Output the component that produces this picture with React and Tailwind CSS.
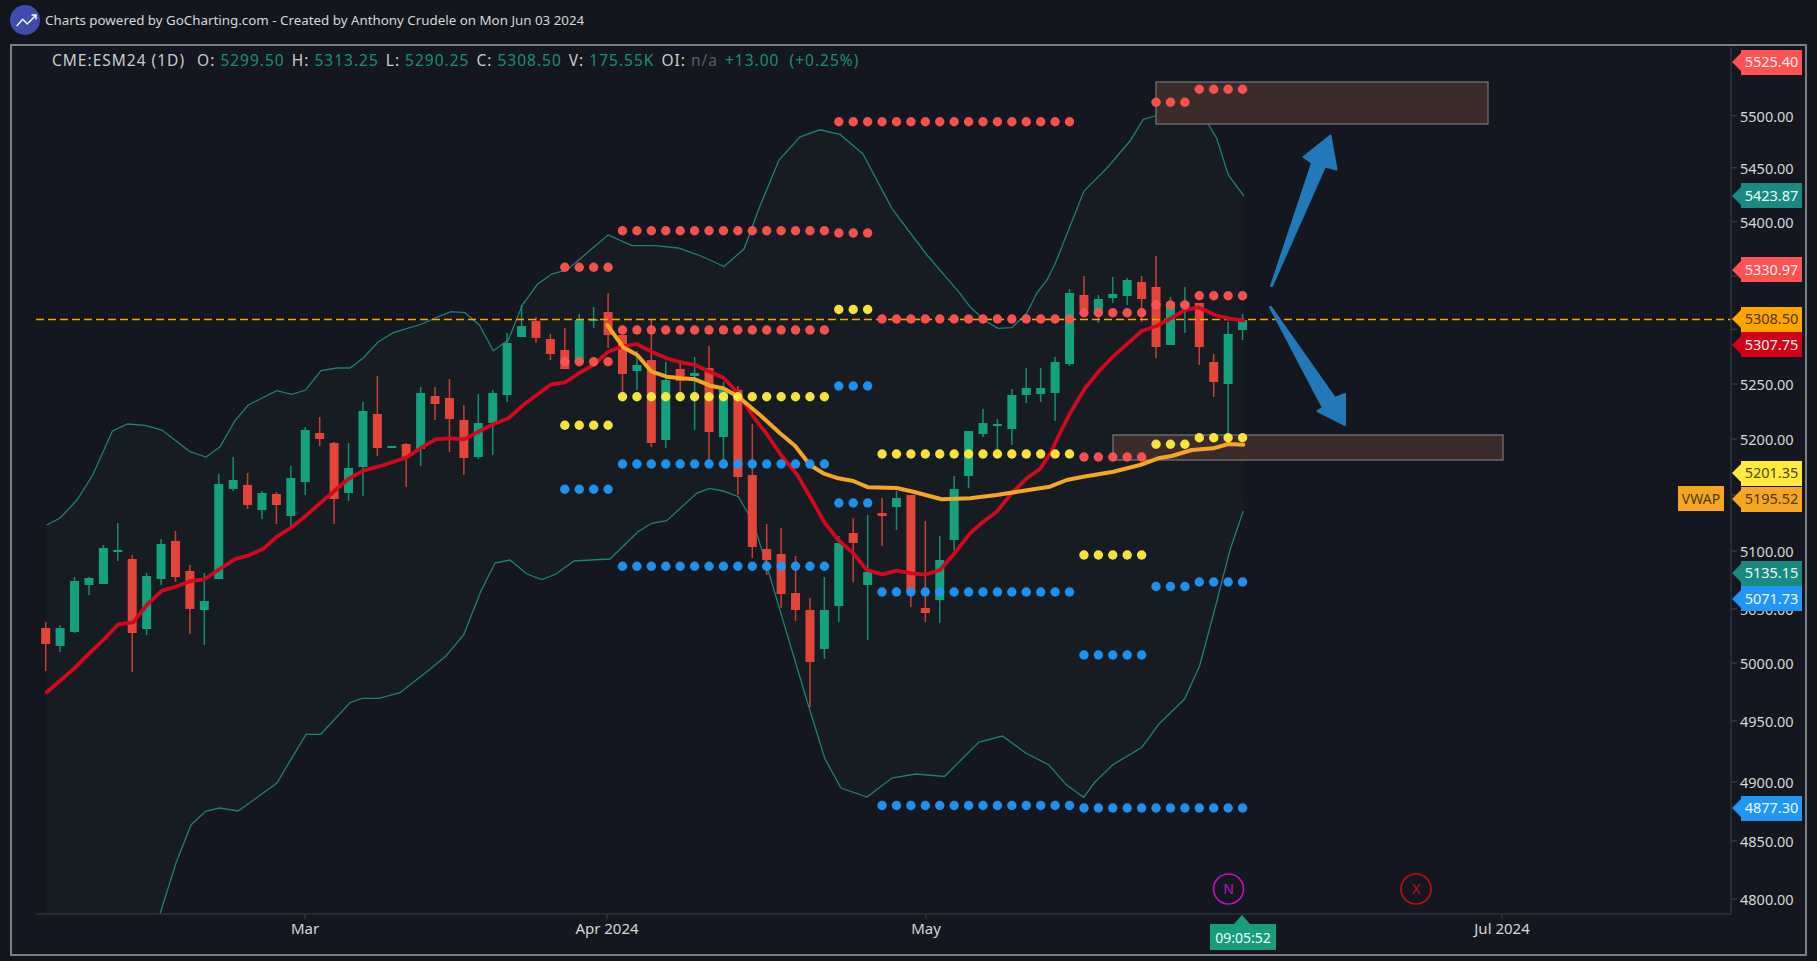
const font = "font-['Noto_Sans',sans-serif]";
const candleX = (i) => 45.7 + 14.42 * i;

// wick top, body top, body bottom, wick bottom, colour
const candles = [
  [622, 628, 644, 671, "r"], [625, 628, 646, 652, "g"], [577, 581, 632, 633, "g"], [577, 578, 585, 595, "g"],
  [545, 548, 584, 584, "g"], [523, 550, 552, 561, "g"], [555, 559, 633, 672, "r"], [573, 576, 629, 635, "g"],
  [539, 544, 579, 585, "g"], [531, 541, 577, 582, "r"], [565, 571, 609, 634, "r"], [573, 601, 610, 645, "g"],
  [474, 484, 579, 579, "g"], [457, 480, 489, 491, "g"], [473, 485, 505, 509, "r"], [491, 493, 510, 519, "g"],
  [492, 494, 505, 524, "r"], [466, 478, 516, 526, "g"], [427, 430, 482, 495, "g"], [417, 433, 439, 446, "r"],
  [442, 443, 499, 524, "r"], [443, 468, 493, 501, "g"], [402, 411, 467, 496, "g"], [376, 414, 448, 456, "r"],
  [446, 446, 448, 448, "g"], [443, 444, 457, 487, "r"], [387, 393, 449, 466, "g"], [387, 396, 404, 420, "r"],
  [379, 398, 419, 452, "r"], [405, 420, 458, 475, "r"], [394, 423, 457, 459, "g"], [390, 393, 423, 455, "g"],
  [333, 343, 395, 402, "g"], [305, 326, 337, 337, "g"], [317, 321, 338, 343, "r"], [334, 339, 354, 360, "r"],
  [328, 350, 369, 369, "r"], [314, 320, 362, 362, "g"], [307, 319, 320, 328, "g"], [293, 312, 335, 348, "r"],
  [335, 335, 374, 393, "r"], [351, 365, 371, 390, "g"], [319, 360, 443, 447, "r"], [362, 380, 440, 448, "g"],
  [363, 369, 381, 393, "r"], [357, 373, 376, 430, "g"], [346, 368, 432, 460, "r"], [382, 388, 437, 460, "g"],
  [386, 390, 477, 495, "r"], [424, 475, 547, 558, "r"], [524, 549, 560, 575, "r"], [528, 554, 594, 608, "r"],
  [556, 593, 610, 621, "r"], [598, 610, 662, 707, "r"], [577, 610, 649, 659, "g"], [536, 543, 606, 622, "g"],
  [518, 533, 543, 582, "r"], [515, 572, 585, 640, "g"], [498, 513, 516, 546, "r"], [491, 498, 507, 530, "g"],
  [495, 495, 592, 607, "r"], [521, 608, 613, 622, "r"], [536, 560, 600, 623, "g"], [476, 489, 540, 550, "g"],
  [431, 431, 476, 488, "g"], [409, 423, 434, 437, "g"], [419, 424, 426, 450, "g"], [389, 395, 429, 445, "g"],
  [368, 388, 395, 403, "g"], [368, 388, 394, 402, "g"], [357, 362, 393, 421, "g"], [289, 293, 364, 366, "g"],
  [276, 295, 310, 313, "r"], [295, 299, 313, 323, "g"], [277, 294, 298, 303, "g"], [278, 280, 296, 305, "g"],
  [276, 282, 299, 322, "r"], [256, 287, 347, 358, "r"], [297, 302, 345, 345, "g"], [287, 302, 307, 333, "g"],
  [303, 303, 347, 365, "r"], [354, 362, 382, 397, "r"], [322, 334, 384, 442, "g"], [314, 320, 330, 340, "g"],
];

// colour, y, first candle, last candle
const dots = [
  ["#ff5252", 267.3, 36, 39], ["#ff5252", 361.7, 36, 39], ["#ffeb3b", 425.3, 36, 39], ["#2196f3", 489.3, 36, 39],
  ["#ff5252", 230.7, 40, 54], ["#ff5252", 330, 40, 54], ["#ffeb3b", 396.7, 40, 54], ["#2196f3", 464, 40, 54], ["#2196f3", 566.3, 40, 54],
  ["#ff5252", 121.7, 55, 71], ["#ff5252", 233, 55, 57], ["#ffeb3b", 309.5, 55, 57], ["#2196f3", 386, 55, 57], ["#2196f3", 503, 55, 57],
  ["#ff5252", 319, 58, 71], ["#ffeb3b", 454, 58, 71], ["#2196f3", 592, 58, 71], ["#2196f3", 805.5, 58, 71],
  ["#ff5252", 312.7, 72, 76], ["#ff5252", 457, 72, 76], ["#ffeb3b", 555, 72, 76], ["#2196f3", 655, 72, 76],
  ["#ff5252", 102.3, 77, 79], ["#ff5252", 305, 77, 79], ["#ffeb3b", 444.3, 77, 79], ["#2196f3", 586.5, 77, 79],
  ["#ff5252", 89.3, 80, 83], ["#ff5252", 295.7, 80, 83], ["#ffeb3b", 437.7, 80, 83], ["#2196f3", 582, 80, 83],
  ["#2196f3", 808, 72, 83],
];

const upper = [
  [46.7, 525], [60, 518], [77, 500], [92.7, 475], [112.4, 431], [127.5, 424], [145, 425.3], [162, 430], [180, 444], [190, 451.7],
  [206, 457], [220, 446.7], [235, 420.7], [248.3, 405], [276.7, 390.7], [291.7, 394.3], [305.7, 390], [321, 370.7], [336.7, 368],
  [350, 368], [363.3, 358], [378.3, 341.7], [393.3, 332.7], [400, 330.7], [421.7, 324], [436.7, 317.3], [451, 311.7], [465, 312.7],
  [479.3, 325], [493.3, 350.7], [508.3, 340], [522.3, 305], [537.7, 284], [551.7, 274], [566.7, 270], [576.7, 261.7], [608, 235],
  [632, 245.7], [655, 245.7], [678, 248], [701, 256], [724, 266.5], [744, 249], [759, 208.6], [779, 160], [800, 136.8], [820, 129.8],
  [840, 134.4], [863, 154], [892, 208.6], [927, 255], [960, 293.3], [970, 306.7], [985, 320.7], [998, 328.3], [1011.7, 327.7],
  [1026.7, 313.3], [1036.7, 293.3], [1047, 280], [1055, 264], [1084, 191], [1107, 168], [1130, 141], [1143.3, 119.3], [1158.3, 115],
  [1185, 103.3], [1199.3, 109], [1216.7, 138.3], [1228.3, 175], [1244, 196],
];

const lower = [
  [160, 914], [176, 863], [191, 825], [206, 811], [220, 808], [238, 811], [255, 799], [276.7, 783.3], [306, 734.3], [320.7, 734.3],
  [350, 702.7], [362.3, 698.3], [379, 698.3], [400, 692.7], [429, 670], [446, 656], [463.6, 635], [481, 591], [495, 563], [510, 560],
  [527, 574], [542, 579.5], [556, 574], [574, 561], [591, 560], [610, 559], [638, 531.7], [651.7, 523.3], [666.7, 520.7], [696.7, 493.3],
  [709.3, 488.3], [723, 491], [738.3, 496.7], [753, 521.7], [768, 570], [806.7, 700], [825, 759], [841, 788], [867, 797], [892, 778],
  [915.6, 774], [944.6, 776.5], [962, 759], [979, 742], [1002.5, 736], [1025.7, 753], [1049, 765], [1066, 784.6], [1083.7, 797.4],
  [1095, 782], [1112.6, 765], [1141.6, 747.6], [1159, 724], [1184.5, 699], [1199.6, 666], [1213.5, 614], [1230, 550], [1243.3, 511],
];

const ema = [
  [46.7, 692.3], [73.3, 669.3], [90, 652.7], [103.3, 640], [118.3, 624.3], [133.3, 622.3], [146.7, 605], [162, 590.7], [175.7, 586.7],
  [190.7, 581], [204.5, 579.3], [219.7, 569], [235, 559.2], [248.3, 555.5], [263.3, 548.8], [277, 536.5], [291.7, 527.3], [306.7, 515],
  [320, 503.3], [334.3, 491], [348.3, 479], [363.3, 470.7], [378.3, 466.7], [393.3, 462], [406.7, 457.3], [421.7, 447.3], [435.7, 439.3],
  [450, 438.3], [464.3, 439.3], [478.3, 431.7], [493.3, 424.3], [508.3, 418.3], [523.3, 405], [536.7, 395], [551, 384.5], [565, 382.3],
  [580, 372.5], [593.3, 365], [608.3, 351.7], [621.7, 346.7], [636.7, 344], [651.7, 351.7], [666.7, 358.3], [681.7, 362.3], [695, 365],
  [710, 371.7], [723.3, 377.7], [738.3, 393.3], [753.3, 416.7], [766.7, 434], [781.7, 456], [796.7, 474], [810, 496.7], [825, 523.3],
  [838.3, 540], [853.3, 553.3], [866.7, 570], [882.3, 574.3], [896.7, 570.7], [911.7, 573.3], [925, 574.7], [940, 570], [955, 552.7],
  [970, 533.3], [983.3, 521.7], [996.7, 511.7], [1011.7, 493.3], [1026.7, 478.3], [1040, 469], [1050, 454], [1060, 433], [1070, 413.3],
  [1085, 388.3], [1100, 370], [1113, 356.7], [1126.7, 344.3], [1141.7, 331], [1156.7, 326], [1170.7, 318.3], [1185, 310], [1198.3, 307.3],
  [1215, 315], [1228.3, 318.3], [1243.3, 320.7],
];

const vwap = [
  [607.3, 325], [623.3, 347.3], [637.3, 355], [651.7, 371.7], [666.7, 376.7], [681.7, 378.3], [695, 379.3], [710, 385.7], [723.3, 388.3],
  [738.3, 396.7], [760, 415], [780, 433.3], [795, 445.7], [810, 465], [823.3, 473.3], [838.3, 478.3], [853.3, 481], [868.3, 487.3],
  [896.7, 488], [913.3, 491.7], [941.7, 499.3], [970, 498.3], [996.7, 495], [1028.3, 490], [1050, 486.7], [1066.7, 480], [1083.3, 476.7],
  [1113.3, 471.7], [1140, 465], [1158.3, 458.3], [1171.7, 456], [1191.7, 450], [1213.3, 448.3], [1228.3, 444], [1243.3, 444.7],
];

const priceTicks = [
  ["5500.00", 115.7], ["5450.00", 167.7], ["5400.00", 221.7], ["", 276], ["", 329.3], ["5250.00", 384], ["5200.00", 439],
  ["", 495], ["5100.00", 551], ["5050.00", 609], ["5000.00", 663], ["4950.00", 721], ["4900.00", 782], ["4850.00", 841], ["4800.00", 899],
];

const priceTags = [
  { label: "5525.40", y: 62, fill: "#ff5252", box: "bg-[#ff5252] text-[#fff1ee]" },
  { label: "5423.87", y: 195.7, fill: "#1a8a80", box: "bg-[#1a8a80] text-[#e8fbf6]" },
  { label: "5330.97", y: 269.7, fill: "#ff5252", box: "bg-[#ff5252] text-[#fff1ee]" },
  { label: "5308.50", y: 319.3, fill: "#ffa500", box: "bg-[#ffa500] text-[#4d3a12]" },
  { label: "5307.75", y: 344.7, fill: "#d0021b", box: "bg-[#d0021b] text-[#fff1ee]" },
  { label: "5201.35", y: 473, fill: "#ffeb3b", box: "bg-[#ffeb3b] text-[#4d4a12]" },
  { label: "5195.52", y: 499, fill: "#f5a623", box: "bg-[#f5a623] text-[#4d3a12]" },
  { label: "5135.15", y: 573, fill: "#1a8a80", box: "bg-[#1a8a80] text-[#e8fbf6]" },
  { label: "5071.73", y: 598.7, fill: "#2196f3", box: "bg-[#2196f3] text-[#f0f8ff]" },
  { label: "4877.30", y: 808, fill: "#2196f3", box: "bg-[#2196f3] text-[#f0f8ff]" },
];

const timeLabels = [["Mar", 305], ["Apr 2024", 607], ["May", 926], ["Jul 2024", 1502]];

const pts = (list) => list.map((p) => p.join(",")).join(" ");

const Logo = () => (
  <svg viewBox="0 0 30 30" className="h-[30px] w-[30px] shrink-0">
    <circle cx="15" cy="15" r="15" fill="#3f4cab" />
    <path d="M6.7 21L12.7 14.3L17.3 19L26 10M21.5 10H26V14.5" fill="none" stroke="#fff" strokeWidth="1.4" />
  </svg>
);

const Legend = () => (
  <div className={`${font} flex gap-[7px] whitespace-pre pl-[40px] pt-[4px] text-[15.5px] leading-[20px] tracking-[1px] text-[#c9ccd0]`}>
    <span>CME:ESM24 (1D) </span>
    {[["O:", "5299.50"], ["H:", "5313.25"], ["L:", "5290.25"], ["C:", "5308.50"], ["V:", "175.55K"]].map(([k, v]) => (
      <span key={k}>
        {k} <span className="text-[#1c8f76]">{v}</span>
      </span>
    ))}
    <span>
      OI: <span className="text-[#5a5d63]">n/a</span>
    </span>
    <span className="text-[#1c8f76]">+13.00  (+0.25%)</span>
  </div>
);

const Chart = () => (
  <svg viewBox="12 46 1793 908" className="absolute inset-0 h-[908px] w-[1793px]">
    <polygon points={`${pts(upper)} ${pts([...lower].reverse())} 46.7,914`} fill="#161c22" />
    <polyline points={pts(upper)} fill="none" stroke="#1f7f78" strokeWidth="1.3" />
    <polyline points={pts(lower)} fill="none" stroke="#1f7f78" strokeWidth="1.3" />

    <rect x="1156" y="82" width="332" height="42" fill="#3b2b2b" stroke="#77777b" strokeWidth="1.2" />
    <rect x="1113" y="435" width="390" height="25" fill="#3b2b2b" stroke="#77777b" strokeWidth="1.2" />

    {candles.map(([wt, bt, bb, wb, c], i) => {
      const x = candleX(i);
      const color = c === "g" ? "#13a17e" : "#e4453a";
      return (
        <g key={i} fill={color}>
          <rect x={x - 0.75} y={wt} width="1.5" height={wb - wt} opacity="0.85" />
          <rect x={x - 4.5} y={bt} width="9" height={Math.max(bb - bt, 2)} />
        </g>
      );
    })}

    <line x1="36" y1="319.5" x2="1732" y2="319.5" stroke="#ffa500" strokeWidth="1.4" strokeDasharray="8 4" />

    <polyline points={pts(ema)} fill="none" stroke="#d0091f" strokeWidth="3.8" strokeLinejoin="round" strokeLinecap="round" />
    <polyline points={pts(vwap)} fill="none" stroke="#f5a623" strokeWidth="4" strokeLinejoin="round" strokeLinecap="round" />

    {dots.map(([color, y, from, to]) =>
      Array.from({ length: to - from + 1 }, (_, n) => (
        <circle key={`${y}-${from}-${n}`} cx={candleX(from + n)} cy={y} r="4.7" fill={color} opacity="0.96" />
      ))
    )}

    {/* trade arrows */}
    <g fill="#2379b8" stroke="#2379b8" strokeWidth="2" strokeLinejoin="round">
      <polygon points="1271,286 1312,163 1303.5,157 1330.5,135.5 1336.5,169.5 1325,166.5 1272,286" />
      <polygon points="1270,307 1323,408 1317.5,411 1345,425 1345,394 1335,398 1271,307" />
    </g>

    {/* axes */}
    <line x1="1731" y1="47" x2="1731" y2="914" stroke="#2e323a" strokeWidth="1.5" />
    <line x1="36" y1="914" x2="1731" y2="914" stroke="#2e323a" strokeWidth="1.5" />
    {priceTicks.map(([, y]) => (
      <line key={y} x1="1731" y1={y} x2="1737" y2={y} stroke="#3a3e46" strokeWidth="1.2" />
    ))}
    {timeLabels.map(([l, x]) => (
      <line key={l} x1={x} y1="914" x2={x} y2="919" stroke="#3a3e46" strokeWidth="1.2" />
    ))}

    {/* session markers */}
    <circle cx="1228.5" cy="889" r="15" fill="none" stroke="#c010c0" strokeWidth="1.6" />
    <text x="1228.5" y="894" textAnchor="middle" fontSize="14" fill="#c010c0" className={font}>N</text>
    <circle cx="1416" cy="889" r="15" fill="none" stroke="#c01010" strokeWidth="1.6" />
    <text x="1416" y="894" textAnchor="middle" fontSize="14" fill="#c01010" className={font}>X</text>

    <polygon points="1242,915 1233,925 1251,925" fill="#1a9b7b" />
  </svg>
);

export default function App() {
  return (
    <div className={`${font} flex h-[961px] w-[1817px] flex-col overflow-hidden bg-[#13161d]`}>
      <header className="flex h-[44px] shrink-0 items-center gap-[5px] pb-[4px] pl-[10px] text-[13.35px] text-[#d5d6d8]">
        <Logo />
        <span>Charts powered by GoCharting.com - Created by Anthony Crudele on Mon Jun 03 2024</span>
      </header>

      <div className="relative mx-[10px] h-[912px] border-2 border-[#7b7f85] bg-[#14171f]">
        <Chart />
        <div className="relative">
          <Legend />
        </div>

        {priceTicks
          .filter(([l]) => l)
          .map(([l, y]) => (
            <span
              key={l}
              className="absolute left-[1728px] text-[14.5px] leading-[18px] text-[#d5d6d8]"
              style={{ top: y - 46 - 9 }}
            >
              {l}
            </span>
          ))}

        {priceTags.map((t) => (
          <div
            key={t.label}
            className="absolute left-[1720px] flex h-[25px] items-center"
            style={{ top: t.y - 46 - 12.5 }}
          >
            <svg viewBox="0 0 9 18" className="h-[18px] w-[9px]">
              <polygon points="9,0 0,9 9,18" fill={t.fill} />
            </svg>
            <div className={`flex h-[25px] w-[61px] items-center justify-center text-[14.5px] ${t.box}`}>{t.label}</div>
          </div>
        ))}

        <div className="absolute left-[1666px] top-[440px] flex h-[25px] w-[46px] items-center justify-center bg-[#f5a623] text-[14px] text-[#4d3a12]">
          VWAP
        </div>

        {timeLabels.map(([l, x]) => (
          <span
            key={l}
            className="absolute top-[872px] -translate-x-1/2 text-[15px] leading-[20px] text-[#d5d6d8]"
            style={{ left: x - 12 }}
          >
            {l}
          </span>
        ))}

        <div className="absolute left-[1198px] top-[878px] flex h-[26px] w-[66px] items-center justify-center bg-[#1a9b7b] text-[14px] text-[#eafff8]">
          09:05:52
        </div>
      </div>
    </div>
  );
}
